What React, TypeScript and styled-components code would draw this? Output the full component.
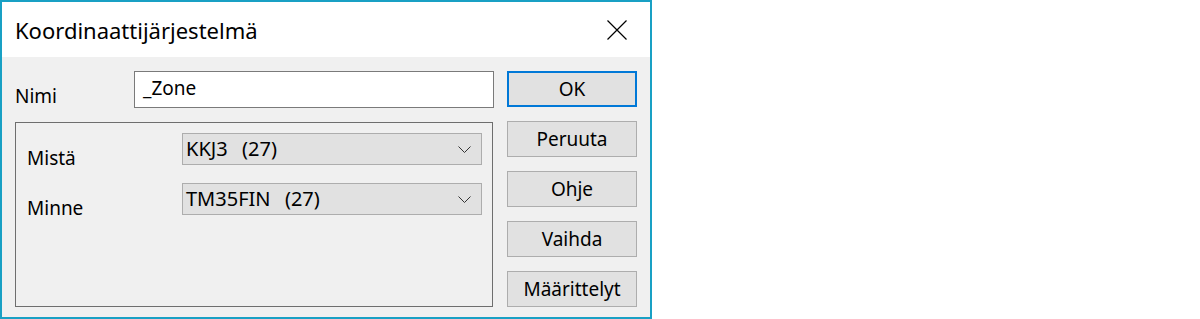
import * as React from "react";
import styled, { createGlobalStyle } from "styled-components";

const GlobalStyle = createGlobalStyle`
  body {
    margin: 0;
    background: #ffffff;
    font-family: "Noto Sans", "Open Sans", sans-serif;
    color: #000000;
  }
`;

const Dialog = styled.div`
  width: 652px;
  height: 319px;
  box-sizing: border-box;
  border: 2px solid #19a0c4;
  display: flex;
  flex-direction: column;
  background: #f0f0f0;
`;

const TitleBar = styled.div`
  height: 55px;
  flex: none;
  background: #ffffff;
  display: flex;
  align-items: center;
  justify-content: space-between;
  padding: 0 23px 0 13px;
`;

const Title = styled.span`
  font-size: 22px;
  line-height: 28px;
`;

const CloseButton = styled.div`
  width: 20px;
  height: 20px;
  display: flex;
`;

const Body = styled.div`
  flex: 1;
  display: flex;
  gap: 13px;
  padding: 14px 13px 10px 13px;
  font-size: 19px;
`;

const LeftColumn = styled.div`
  flex: 1;
  display: flex;
  flex-direction: column;
`;

const NameRow = styled.div`
  display: flex;
  height: 37px;
`;

const Label = styled.div<{ $width?: number }>`
  width: ${(p) => (p.$width ? `${p.$width}px` : "auto")};
  flex: none;
  padding-top: 13px;
  line-height: 24px;
`;

const TextField = styled.div`
  flex: 1;
  box-sizing: border-box;
  height: 37px;
  background: #ffffff;
  border: 1px solid #7a7a7a;
  padding: 4px 8px;
  line-height: 24px;
`;

const GroupBox = styled.div`
  margin-top: 14px;
  height: 185px;
  margin-right: 1px;
  box-sizing: border-box;
  border: 1px solid #6e6e6e;
  padding: 10px 10px 0 11px;
  display: grid;
  grid-template-columns: 155px 1fr;
  grid-auto-rows: min-content;
  row-gap: 13px;
  align-items: start;
`;

const Combo = styled.div`
  height: 32px;
  box-sizing: border-box;
  background: #e1e1e1;
  border: 1px solid #adadad;
  display: flex;
  align-items: center;
  justify-content: space-between;
  padding: 0 10px 0 3px;
  font-size: 20px;
  line-height: 30px;
  word-spacing: 2px;
  white-space: pre;
`;

const Chevron = styled.svg`
  width: 13px;
  height: 7px;
  flex: none;
`;

const ButtonColumn = styled.div`
  width: 130px;
  flex: none;
  display: flex;
  flex-direction: column;
  gap: 14px;
`;

const Button = styled.div<{ $default?: boolean }>`
  height: 36px;
  box-sizing: border-box;
  background: #e1e1e1;
  border: ${(p) => (p.$default ? "2px solid #0078d7" : "1px solid #adadad")};
  display: flex;
  align-items: center;
  justify-content: center;
  line-height: 24px;
`;

const ComboBox = ({ value }: { value: string }) => (
  <Combo>
    <span>{value}</span>
    <Chevron viewBox="0 0 13 7">
      <path d="M0.5 0.5 L6.5 6.5 L12.5 0.5" fill="none" stroke="#333" strokeWidth="1" />
    </Chevron>
  </Combo>
);

const App = () => {
  return (
    <>
      <GlobalStyle />
      <Dialog>
        <TitleBar>
          <Title>Koordinaattijärjestelmä</Title>
          <CloseButton>
            <svg width="20" height="20" viewBox="0 0 20 20">
              <path d="M0.5 0.5 L19.5 19.5 M19.5 0.5 L0.5 19.5" stroke="#000" strokeWidth="1.2" />
            </svg>
          </CloseButton>
        </TitleBar>
        <Body>
          <LeftColumn>
            <NameRow>
              <Label $width={119}>Nimi</Label>
              <TextField>_Zone</TextField>
            </NameRow>
            <GroupBox>
              <Label>Mistä</Label>
              <ComboBox value="KKJ3  (27)" />
              <Label>Minne</Label>
              <ComboBox value="TM35FIN  (27)" />
            </GroupBox>
          </LeftColumn>
          <ButtonColumn>
            <Button $default>OK</Button>
            <Button>Peruuta</Button>
            <Button>Ohje</Button>
            <Button>Vaihda</Button>
            <Button>Määrittelyt</Button>
          </ButtonColumn>
        </Body>
      </Dialog>
    </>
  );
};

export default App;
